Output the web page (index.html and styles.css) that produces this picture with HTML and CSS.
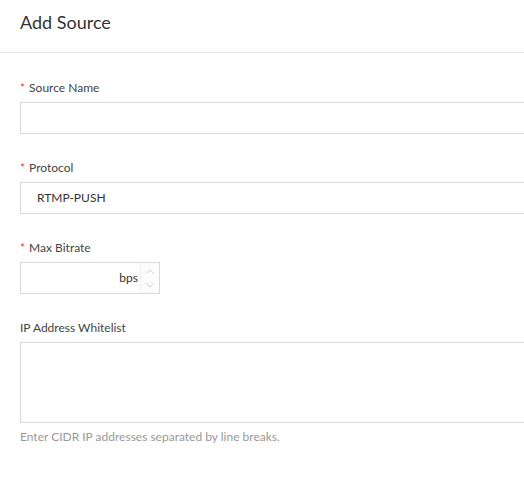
FILE: index.html
```html
<!DOCTYPE html>
<html>
<head>
<meta charset="utf-8">
<link rel="stylesheet" href="styles.css">
</head>
<body>
<div class="page">
  <div class="header"><h1 class="title">Add Source</h1></div>
  <form class="form">
    <div class="field">
      <label class="label"><span class="req">*</span>Source Name</label>
      <div class="input"></div>
    </div>
    <div class="field">
      <label class="label"><span class="req">*</span>Protocol</label>
      <div class="input select">RTMP-PUSH</div>
    </div>
    <div class="field">
      <label class="label"><span class="req">*</span>Max Bitrate</label>
      <div class="number">
        <span class="unit">bps</span>
        <span class="spin">
          <svg viewBox="0 0 8 5" width="8" height="5"><path d="M0.5 4.5 L4 1 L7.5 4.5" fill="none" stroke="#d0d0d0" stroke-width="1"/></svg>
          <svg viewBox="0 0 8 5" width="8" height="5"><path d="M0.5 0.5 L4 4 L7.5 0.5" fill="none" stroke="#d0d0d0" stroke-width="1"/></svg>
        </span>
      </div>
    </div>
    <div class="field">
      <label class="label">IP Address Whitelist</label>
      <div class="input textarea"></div>
      <div class="help">Enter CIDR IP addresses separated by line breaks.</div>
    </div>
  </form>
</div>
</body>
</html>
```
FILE: styles.css
```css
html, body {
  margin: 0;
  padding: 0;
  background: #fff;
  overflow: hidden;
}
body {
  font-family: Lato, "Noto Sans", sans-serif;
  color: #333;
}
.page {
  width: 524px;
  height: 490px;
  overflow: hidden;
}
.header {
  height: 53px;
  border-bottom: 1px solid #e6e6e6;
  padding: 0 20px;
  box-sizing: border-box;
}
.title {
  margin: 0;
  padding-top: 10px;
  font-size: 18px;
  line-height: 24px;
  font-weight: 400;
  color: #333;
}
.form {
  padding: 26px 0 0 20px;
}
.field {
  margin-bottom: 25px;
}
.label {
  display: block;
  font-size: 12px;
  line-height: 18px;
  color: #444;
  margin-bottom: 5px;
}
.req {
  color: #f04134;
  margin-right: 4px;
}
.input {
  width: 504px;
  height: 32px;
  box-sizing: border-box;
  border: 1px solid #d9d9d9;
  border-right: 0;
  font-size: 12px;
  line-height: 30px;
}
.select {
  padding-left: 16px;
  color: #333;
}
.textarea {
  height: 81px;
}
.number {
  width: 140px;
  height: 32px;
  box-sizing: border-box;
  border: 1px solid #d9d9d9;
  display: flex;
  justify-content: flex-end;
  font-size: 12px;
  line-height: 30px;
}
.unit {
  padding-right: 2px;
}
.spin {
  width: 18px;
  border-left: 1px solid #f2f2f2;
  background: #fcfcfc;
  display: flex;
  flex-direction: column;
  align-items: center;
  justify-content: center;
  gap: 9px;
}
.spin svg {
  display: block;
}
.help {
  margin-top: 5px;
  font-size: 12px;
  line-height: 18px;
  color: #999;
}
```
